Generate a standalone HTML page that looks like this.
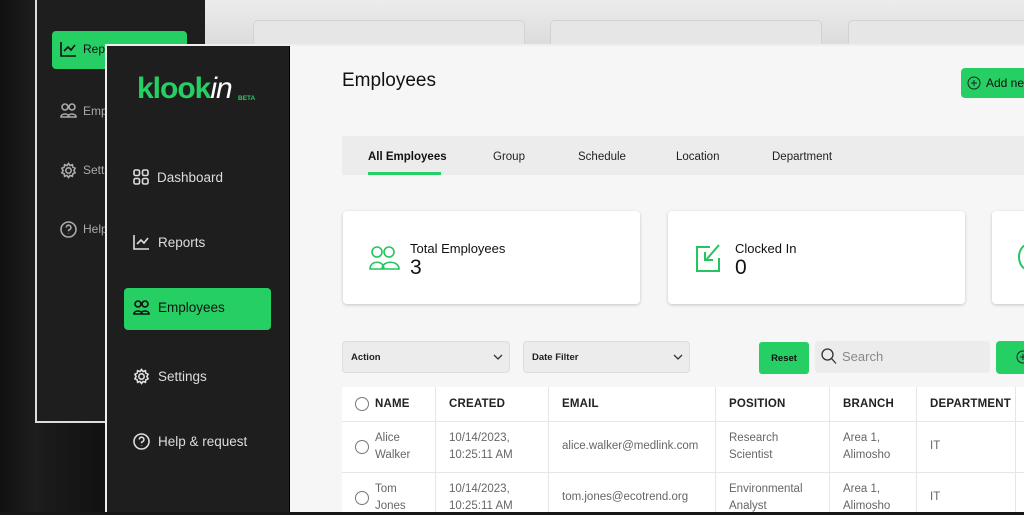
<!DOCTYPE html>
<html><head><meta charset="utf-8"><style>
*{box-sizing:border-box;margin:0;padding:0}
body{width:1024px;height:512px;overflow:hidden;position:relative;background:#161616;font-family:"Liberation Sans",sans-serif}
.a{position:absolute}
.ic{position:absolute;stroke:currentColor;fill:none;stroke-width:1.6}
.mi{position:absolute;font-size:13.5px;color:#ddd;display:flex;align-items:center;gap:8px}
.th{position:absolute;top:387px;height:34px;line-height:34px;font-size:11.5px;font-weight:bold;color:#222;letter-spacing:.2px}
.td{position:absolute;font-size:11.5px;color:#666;line-height:17px}
.vl{position:absolute;top:387px;width:1px;height:125px;background:#e6e6ea}
.hl{position:absolute;left:342px;width:682px;height:1px;background:#e6e6ea}
.cb{position:absolute;width:14px;height:14px;border:1.3px solid #777;border-radius:50%}
.tb{position:absolute;top:151px;font-size:11.5px;color:#222}
</style></head><body>
<div class="a" style="left:0;top:0;width:37px;height:512px;background:linear-gradient(90deg,#111,#1e1e1e)"></div>
<div class="a" style="left:35px;top:0;width:2px;height:423px;background:#ddd"></div>
<div class="a" style="left:35px;top:421px;width:72px;height:2px;background:#ddd"></div>
<div class="a" style="left:37px;top:0;width:168px;height:421px;background:#1e1e1e"></div>
<div class="a" style="left:37px;top:423px;width:68px;height:89px;background:linear-gradient(90deg,#1c1c1c,#111)"></div>
<div class="a" style="left:205px;top:0;width:819px;height:44px;background:linear-gradient(#ececec,#dcdcdc)"></div>
<div class="a" style="left:253px;top:20px;width:272px;height:30px;background:#e6e6e6;border:1px solid #d2d2d6;border-radius:5px"></div>
<div class="a" style="left:550px;top:20px;width:272px;height:30px;background:#e6e6e6;border:1px solid #d2d2d6;border-radius:5px"></div>
<div class="a" style="left:848px;top:20px;width:200px;height:30px;background:#e6e6e6;border:1px solid #d2d2d6;border-radius:5px"></div>
<div class="a" style="left:52px;top:31px;width:135px;height:38px;background:#26cf63;border-radius:4px"></div>
<svg class="ic" style="left:60px;top:41px;color:#111" width="17" height="16" viewBox="0 0 17 16"><path d="M1 1v14h15M4 10l4-4 3 3 4-5"/></svg>
<div class="a" style="left:83px;top:42px;font-size:12px;color:#111">Repo</div>
<svg class="ic" style="left:60px;top:103px;color:#aaa" width="17" height="15" viewBox="0 0 17 15"><circle cx="5" cy="4" r="3"/><circle cx="12" cy="4" r="3"/><path d="M1 14c0-4 8-4 8 0zM8 14c0-4 8-4 8 0z"/></svg>
<div class="a" style="left:83px;top:104px;font-size:12px;color:#aaa">Emp</div>
<svg class="ic" style="left:60px;top:162px;color:#aaa" width="17" height="17" viewBox="0 0 17 17"><circle cx="8.5" cy="8.5" r="2.7"/><path d="M8.5 1.5l1.5 2 2.4-.8.4 2.4 2.3 1.1-1.2 2.3 1.2 2.3-2.3 1.1-.4 2.4-2.4-.8-1.5 2-1.5-2-2.4.8-.4-2.4-2.3-1.1 1.2-2.3-1.2-2.3 2.3-1.1.4-2.4 2.4.8z"/></svg>
<div class="a" style="left:83px;top:163px;font-size:12px;color:#aaa">Sett</div>
<svg class="ic" style="left:60px;top:221px;color:#aaa" width="17" height="17" viewBox="0 0 17 17"><circle cx="8.5" cy="8.5" r="7.5"/><path d="M6.3 6.5a2.3 2.3 0 1 1 3 2.2c-.6.3-.8.7-.8 1.5M8.5 12.3v.3"/></svg>
<div class="a" style="left:83px;top:222px;font-size:12px;color:#aaa">Help</div>

<div class="a" style="left:105px;top:44px;width:919px;height:468px;background:#f6f6f6;border-left:2px solid #eee;border-top:2px solid #eee"></div>
<div class="a" style="left:107px;top:46px;width:183px;height:466px;background:#1e1e1e;border-right:1px solid #000"></div>
<div class="a" style="left:137px;top:72px;font-size:30px;font-weight:bold;color:#26cf63;letter-spacing:-1px">klook<i style="color:#fff;font-weight:normal">in</i></div>
<div class="a" style="left:238px;top:95px;font-size:6.5px;font-weight:bold;color:#26cf63">BETA</div>
<div class="mi" style="left:133px;top:169px"><svg class="ic" style="position:static" width="16" height="16" viewBox="0 0 16 16"><rect x="1" y="1" width="5.5" height="5.5" rx="1.5"/><rect x="9.5" y="1" width="5.5" height="5.5" rx="1.5"/><rect x="1" y="9.5" width="5.5" height="5.5" rx="1.5"/><rect x="9.5" y="9.5" width="5.5" height="5.5" rx="1.5"/></svg>Dashboard</div>
<div class="mi" style="left:133px;top:234px"><svg class="ic" style="position:static" width="17" height="16" viewBox="0 0 17 16"><path d="M1 1v14h15M4 10l4-4 3 3 4-5"/></svg>Reports</div>
<div class="a" style="left:124px;top:288px;width:147px;height:42px;background:#26cf63;border-radius:4px"></div>
<div class="mi" style="left:133px;top:300px;color:#111"><svg class="ic" style="position:static" width="17" height="15" viewBox="0 0 17 15"><circle cx="5" cy="4" r="3"/><circle cx="12" cy="4" r="3"/><path d="M1 14c0-4 8-4 8 0zM8 14c0-4 8-4 8 0z"/></svg>Employees</div>
<div class="mi" style="left:133px;top:368px"><svg class="ic" style="position:static" width="17" height="17" viewBox="0 0 17 17"><circle cx="8.5" cy="8.5" r="2.7"/><path d="M8.5 1.5l1.5 2 2.4-.8.4 2.4 2.3 1.1-1.2 2.3 1.2 2.3-2.3 1.1-.4 2.4-2.4-.8-1.5 2-1.5-2-2.4.8-.4-2.4-2.3-1.1 1.2-2.3-1.2-2.3 2.3-1.1.4-2.4 2.4.8z"/></svg>Settings</div>
<div class="mi" style="left:133px;top:433px"><svg class="ic" style="position:static" width="17" height="17" viewBox="0 0 17 17"><circle cx="8.5" cy="8.5" r="7.5"/><path d="M6.3 6.5a2.3 2.3 0 1 1 3 2.2c-.6.3-.8.7-.8 1.5M8.5 12.3v.3"/></svg>Help &amp; request</div>

<div class="a" style="left:342px;top:70px;font-size:19px;color:#111">Employees</div>
<div class="a" style="left:961px;top:68px;width:80px;height:30px;background:#26cf63;border-radius:4px;font-size:12px;color:#111;padding:8px 0 0 25px">Add new</div>
<svg class="ic" style="left:967px;top:76px;color:#222;stroke-width:1" width="14" height="14" viewBox="0 0 14 14"><circle cx="7" cy="7" r="6"/><path d="M7 4v6M4 7h6"/></svg>

<div class="a" style="left:342px;top:136px;width:682px;height:39px;background:#ececec"></div>
<div class="tb" style="left:368px;font-weight:bold;color:#111">All Employees</div>
<div class="a" style="left:368px;top:172px;width:73px;height:3px;background:#26cf63"></div>
<div class="tb" style="left:493px">Group</div>
<div class="tb" style="left:578px">Schedule</div>
<div class="tb" style="left:676px">Location</div>
<div class="tb" style="left:772px">Department</div>

<div class="a" style="left:343px;top:211px;width:297px;height:93px;background:#fff;border-radius:4px;box-shadow:0 1px 3px rgba(0,0,0,.2)"></div>
<div class="a" style="left:668px;top:211px;width:297px;height:93px;background:#fff;border-radius:4px;box-shadow:0 1px 3px rgba(0,0,0,.2)"></div>
<div class="a" style="left:992px;top:211px;width:60px;height:93px;background:#fff;border-radius:4px;box-shadow:0 1px 3px rgba(0,0,0,.2)"></div>
<svg class="ic" style="left:369px;top:246px;color:#22c55e" width="32" height="24" viewBox="0 0 32 24"><circle cx="8" cy="6" r="5"/><circle cx="20" cy="6" r="5"/><path d="M1 23c0-9 14-9 14 0zM13 23c0-9 17-9 17 0z"/></svg>
<div class="a" style="left:410px;top:241px;font-size:13px;color:#111">Total Employees</div>
<div class="a" style="left:410px;top:256px;font-size:21px;color:#111">3</div>
<svg class="ic" style="left:695px;top:243px;color:#22c55e;stroke-width:2" width="28" height="29" viewBox="0 0 28 29"><path d="M15 4H2v24h22V15M24 2L11 17M10 9v8h8"/></svg>
<div class="a" style="left:735px;top:241px;font-size:13px;color:#111">Clocked In</div>
<div class="a" style="left:735px;top:256px;font-size:21px;color:#111">0</div>
<div class="a" style="left:1018px;top:243px;width:22px;height:28px;border:2px solid #22c55e;border-radius:50%"></div>

<div class="a" style="left:342px;top:341px;width:168px;height:32px;background:#ececec;border:1px solid #ddd;border-radius:4px;font-size:9.5px;font-weight:bold;color:#222;padding:10px 0 0 8px">Action</div>
<div class="a" style="left:523px;top:341px;width:167px;height:32px;background:#ececec;border:1px solid #ddd;border-radius:4px;font-size:9.5px;font-weight:bold;color:#222;padding:10px 0 0 8px">Date Filter</div>
<svg class="ic" style="left:493px;top:354px;color:#333;stroke-width:1.3" width="10" height="6" viewBox="0 0 10 6"><path d="M1 1l4 4 4-4"/></svg>
<svg class="ic" style="left:673px;top:354px;color:#333;stroke-width:1.3" width="10" height="6" viewBox="0 0 10 6"><path d="M1 1l4 4 4-4"/></svg>
<div class="a" style="left:759px;top:342px;width:50px;height:32px;background:#26cf63;border-radius:3px;font-size:9.5px;font-weight:bold;color:#111;text-align:center;line-height:33px">Reset</div>
<div class="a" style="left:815px;top:341px;width:175px;height:32px;background:#ececec;border-radius:4px;font-size:13px;color:#888;padding:8px 0 0 27px">Search</div>
<svg class="ic" style="left:821px;top:348px;color:#333;stroke-width:1.3" width="16" height="17" viewBox="0 0 16 17"><circle cx="6.5" cy="6.5" r="5.5"/><path d="M10.5 10.5l4.5 5"/></svg>
<div class="a" style="left:996px;top:341px;width:40px;height:33px;background:#26cf63;border-radius:4px"></div>
<svg class="ic" style="left:1016px;top:350px;color:#222;stroke-width:1" width="14" height="14" viewBox="0 0 14 14"><circle cx="7" cy="7" r="6"/><path d="M7 4v6M4 7h6"/></svg>

<div class="a" style="left:342px;top:387px;width:682px;height:125px;background:#fff"></div>
<div class="hl" style="top:421px"></div><div class="hl" style="top:472px"></div>
<div class="vl" style="left:435px"></div><div class="vl" style="left:548px"></div><div class="vl" style="left:715px"></div><div class="vl" style="left:829px"></div><div class="vl" style="left:916px"></div><div class="vl" style="left:1015px"></div>
<div class="cb" style="left:355px;top:397px"></div>
<div class="th" style="left:375px">NAME</div><div class="th" style="left:449px">CREATED</div><div class="th" style="left:562px">EMAIL</div><div class="th" style="left:729px">POSITION</div><div class="th" style="left:843px">BRANCH</div><div class="th" style="left:930px">DEPARTMENT</div>
<div class="cb" style="left:355px;top:440px"></div>
<div class="td" style="left:375px;top:430px">Alice<br>Walker</div><div class="td" style="left:449px;top:430px">10/14/2023,<br>10:25:11 AM</div><div class="td" style="left:562px;top:438px">alice.walker@medlink.com</div><div class="td" style="left:729px;top:430px">Research<br>Scientist</div><div class="td" style="left:843px;top:430px">Area 1,<br>Alimosho</div><div class="td" style="left:930px;top:438px">IT</div>
<div class="cb" style="left:355px;top:491px"></div>
<div class="td" style="left:375px;top:481px">Tom<br>Jones</div><div class="td" style="left:449px;top:481px">10/14/2023,<br>10:25:11 AM</div><div class="td" style="left:562px;top:489px">tom.jones@ecotrend.org</div><div class="td" style="left:729px;top:481px">Environmental<br>Analyst</div><div class="td" style="left:843px;top:481px">Area 1,<br>Alimosho</div><div class="td" style="left:930px;top:489px">IT</div>
</body></html>
